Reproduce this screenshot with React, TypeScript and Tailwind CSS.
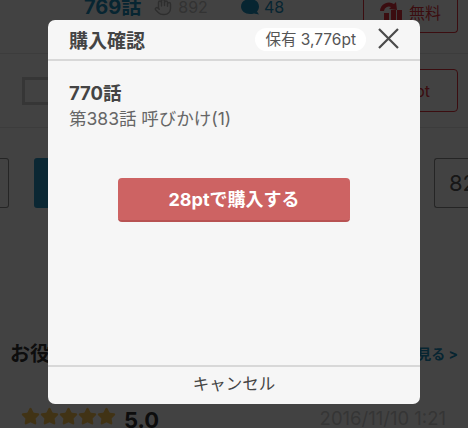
import React from "react";
import { Hand, Star } from "lucide-react";

const font = { fontFamily: 'Inter, "Noto Sans CJK JP", sans-serif' };

function ChargeIcon() {
  return (
    <svg width="24" height="22" viewBox="0 0 24 22" fill="#d9333c">
      <path d="M1 9a9 9 0 0 1 14-7l2-2 1 8-8-1 2-2a5 5 0 0 0-7 4z" />
      <rect x="5" y="11" width="5" height="11" />
      <rect x="12" y="8" width="5" height="14" />
      <rect x="18" y="8" width="5" height="14" />
    </svg>
  );
}

export default function App() {
  return (
    <div style={font} className="relative h-[428px] w-[468px] overflow-hidden bg-[#f5f5f5]">
      <div className="flex h-[54px] items-start justify-between border-b border-[#ddd] pl-[84px] pr-[10px]">
        <div className="-mt-[8px] flex items-center">
          <span className="text-[20px] font-bold leading-[30px] text-[#1a88b5]">769話</span>
          <Hand className="ml-[13px] h-[18px] w-[18px] text-[#aaa]" />
          <span className="ml-[6px] text-[16px] leading-[30px] text-[#bbb]">892</span>
          <svg className="ml-[33px]" width="19" height="17" viewBox="0 0 19 17" fill="#1a88b5">
            <path d="M9 0c5 0 9 3 9 7.500 0 2-1 4-2 5l2 3-5-1c-1 .5-3 .5-4 .5-5 0-9-3-9-7.500S4 0 9 0z" />
          </svg>
          <span className="ml-[4px] text-[16px] leading-[30px] text-[#1a88b5]">48</span>
        </div>
        <div className="flex h-[33px] w-[95px] items-center gap-[6px] rounded-b-[4px] border border-t-0 border-[#d9333c] pb-[6px] pl-[15px]">
          <ChargeIcon />
          <span className="text-[16px] leading-none text-[#d9333c]">無料</span>
        </div>
      </div>

      <div className="flex h-[74px] items-center justify-between border-b border-[#ddd] pl-[22px] pr-[10px]">
        <div className="h-[28px] w-[30px] border-[3px] border-[#c8c8c8]" />
        <div className="flex h-[43px] w-[108px] items-center justify-end rounded-[4px] border border-[#d9333c] pr-[27px]">
          <span className="text-[16px] text-[#d9333c]">pt</span>
        </div>
      </div>

      <div className="mt-[30px] flex h-[50px] items-center">
        <div className="h-full w-[9px] rounded-r-[3px] border border-l-0 border-[#888]" />
        <div className="ml-[25px] h-full w-[100px] rounded-[3px] bg-[#2990bd]" />
        <div className="ml-auto flex h-full w-[34px] items-center rounded-l-[3px] border border-r-0 border-[#888] pl-[14px]">
          <span className="text-[22px] text-[#555]">82</span>
        </div>
      </div>

      <div className="mt-[136px] flex items-center justify-between pl-[10px] pr-[10px]">
        <span className="text-[20px] font-bold leading-none text-[#333]">お役</span>
        <span className="text-[14px] font-bold leading-none text-[#1a88b5]">見る &gt;</span>
      </div>

      <div className="mt-[43px] flex items-start justify-between pl-[21px] pr-[22px]">
        <div className="flex items-start">
          <div className="flex">
            {[0, 1, 2, 3, 4].map((i) => (
              <Star key={i} className="h-[19px] w-[19px] fill-[#f0bc50] text-[#f0bc50]" />
            ))}
          </div>
          <span className="ml-[8px] mt-[2px] text-[22px] font-bold leading-none text-[#333]">5.0</span>
        </div>
        <span className="mt-[2px] text-[18.500px] leading-none text-[#c4c4c4]">2016/11/10 1:21</span>
      </div>

      {/* overlay */}
      <div className="absolute inset-0 bg-black/[.73]" />

      <div className="absolute left-[48px] top-[20px] flex h-[384px] w-[372px] flex-col rounded-[7px] bg-[#f6f6f6]">
        <div className="flex h-[41px] items-center border-b-2 border-[#d8d8d8] pl-[21px] pr-[21px]">
          <span className="mt-[3px] text-[19px] font-bold leading-none text-[#444]">購入確認</span>
          <span className="ml-auto rounded-full bg-white px-[10px] py-[3px] text-[15.500px] leading-[17px] text-[#555]">
            保有 3,776pt
          </span>
          <svg className="ml-[12px] -mt-[3px]" width="21" height="21" viewBox="0 0 21 21" stroke="#4a4a4a" strokeWidth="2.200">
            <path d="M1 1l19 19M20 1L1 20" />
          </svg>
        </div>

        <div className="flex-1">
          <div className="pl-[21px] pt-[20px]">
            <p className="text-[18.500px] font-bold leading-[24px] text-[#444]">770話</p>
            <p className="mt-[2px] text-[17.500px] leading-[24px] text-[#666]">第383話 呼びかけ(1)</p>
          </div>
          <button className="mx-auto mt-[47px] block h-[44px] w-[232px] rounded-[4px] border-b-2 border-[#b85353] bg-[#cd6363] text-[18px] font-bold text-white">
            28ptで購入する
          </button>
        </div>

        <div className="flex h-[39px] items-center justify-center border-t-2 border-[#d8d8d8] pb-[3px] text-[16.500px] text-[#444]">
          キャンセル
        </div>
      </div>
    </div>
  );
}
